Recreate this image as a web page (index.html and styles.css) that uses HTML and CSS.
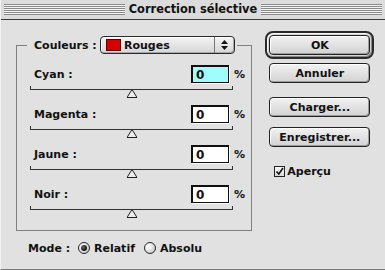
FILE: index.html
```html
<!DOCTYPE html>
<html lang="fr">
<head>
<meta charset="utf-8">
<title>Correction sélective</title>
<link rel="stylesheet" href="styles.css">
</head>
<body>
<div class="window">
  <div class="titlebar">
    <span class="stripes"></span>
    <span class="title">Correction sélective</span>
    <span class="stripes"></span>
  </div>
  <div class="content">
    <div class="left">
      <fieldset class="group">
        <legend class="legend">
          <span class="legend-label">Couleurs :</span>
          <span class="popup">
            <span class="swatch"></span>
            <span class="popup-text">Rouges</span>
            <span class="popup-arrows">
              <svg width="7" height="10" viewBox="0 0 7 10"><polygon points="3.5,0 7,4 0,4" fill="#111"/><polygon points="0,6 7,6 3.5,10" fill="#111"/></svg>
            </span>
          </span>
        </legend>
        <div class="rows">
          <div class="row">
            <div class="row-top"><span class="row-label">Cyan :</span><span class="field field-active">0</span><span class="pct">%</span></div>
            <div class="slider"><svg class="thumb" width="11" height="9" viewBox="0 0 11 9"><polygon points="5.5,0.5 10.5,8.5 0.5,8.5" fill="#ececec" stroke="#222" stroke-width="1"/></svg></div>
          </div>
          <div class="row">
            <div class="row-top"><span class="row-label">Magenta :</span><span class="field">0</span><span class="pct">%</span></div>
            <div class="slider"><svg class="thumb" width="11" height="9" viewBox="0 0 11 9"><polygon points="5.5,0.5 10.5,8.5 0.5,8.5" fill="#ececec" stroke="#222" stroke-width="1"/></svg></div>
          </div>
          <div class="row">
            <div class="row-top"><span class="row-label">Jaune :</span><span class="field">0</span><span class="pct">%</span></div>
            <div class="slider"><svg class="thumb" width="11" height="9" viewBox="0 0 11 9"><polygon points="5.5,0.5 10.5,8.5 0.5,8.5" fill="#ececec" stroke="#222" stroke-width="1"/></svg></div>
          </div>
          <div class="row">
            <div class="row-top"><span class="row-label">Noir :</span><span class="field">0</span><span class="pct">%</span></div>
            <div class="slider"><svg class="thumb" width="11" height="9" viewBox="0 0 11 9"><polygon points="5.5,0.5 10.5,8.5 0.5,8.5" fill="#ececec" stroke="#222" stroke-width="1"/></svg></div>
          </div>
        </div>
      </fieldset>
      <div class="mode">
        <span class="mode-label">Mode :</span>
        <span class="radio radio-on"></span><span class="radio-text">Relatif</span>
        <span class="radio radio-second"></span><span class="radio-text">Absolu</span>
      </div>
    </div>
    <div class="right">
      <div class="default-ring"><button class="btn">OK</button></div>
      <button class="btn btn-side btn-annuler">Annuler</button>
      <button class="btn btn-side btn-charger">Charger...</button>
      <button class="btn btn-side btn-enreg">Enregistrer...</button>
      <div class="check-row">
        <span class="checkbox"><svg width="9" height="9" viewBox="0 0 9 9"><path d="M1.5 4.5 L3.8 7 L8 1" fill="none" stroke="#111" stroke-width="1.6"/></svg></span>
        <span class="check-text">Aperçu</span>
      </div>
    </div>
  </div>
</div>
</body>
</html>
```

FILE: styles.css
```css
* { box-sizing: border-box; }

body {
  margin: 0;
  background: #e1e1e1;
  font: bold 11px "DejaVu Sans", sans-serif;
  color: #111;
}

.window {
  width: 385px;
  height: 270px;
  display: flex;
  flex-direction: column;
  border-bottom: 1px solid #7a7a7a;
  border-left: 1px solid #f2f2f2;
}

.titlebar {
  height: 20px;
  display: flex;
  align-items: center;
  gap: 4px;
  padding: 0 3px;
  background: #dcdcdc;
  border-bottom: 1px solid #3a3a3a;
}

.stripes {
  flex: 1;
  height: 11px;
  background: repeating-linear-gradient(to bottom, #8a8a8a 0 1px, #f4f4f4 1px 2px);
}

.title {
  font-size: 11.4px;
  line-height: 19px;
}

.content {
  flex: 1;
  display: flex;
}

.left {
  width: 265px;
  padding: 16px 0 0 15px;
}

.group {
  margin: 0;
  width: 236px;
  padding: 11px 0 20px;
  border: 1px solid #808080;
}

.legend {
  margin-left: 10px;
  padding: 0 2px 0 7px;
  height: 18px;
  display: flex;
  align-items: center;
  gap: 3px;
}

.legend-label {
  width: 63px;
}

.popup {
  display: flex;
  align-items: center;
  width: 135px;
  height: 18px;
  border: 1px solid #2a2a2a;
  border-radius: 4px;
  background: linear-gradient(#f4f4f4, #d6d6d6);
  box-shadow: inset 1px 1px 0 #fff, inset -1px -1px 0 #a8a8a8;
}

.swatch {
  width: 15px;
  height: 12px;
  margin-left: 5px;
  background: #d60000;
  border: 1px solid #5a0000;
}

.popup-text {
  flex: 1;
  margin-left: 3px;
}

.popup-arrows {
  width: 20px;
  height: 100%;
  display: flex;
  align-items: center;
  justify-content: center;
  border-left: 1px solid #777;
}

.rows {
  display: flex;
  flex-direction: column;
  gap: 15px;
}

.row-top {
  display: flex;
  align-items: center;
  height: 18px;
  padding-left: 17px;
}

.row-label {
  flex: 1;
}

.field {
  width: 38px;
  height: 18px;
  padding-left: 3px;
  line-height: 16px;
  font-size: 12px;
  background: #fff;
  border: 1px solid #111;
  border-width: 2px 1px 1px 2px;
  box-shadow: 1px 1px 0 #fafafa;
}

.field-active {
  background: #a0fdfd;
}

.pct {
  width: 17px;
  margin-left: 5px;
}

.slider {
  position: relative;
  width: 203px;
  height: 4px;
  margin: 3px 0 0 13px;
  border: 1px solid #333;
  border-top: 0;
}

.thumb {
  position: absolute;
  left: 50%;
  top: 3px;
  transform: translateX(-50%);
  display: block;
}

.mode {
  display: flex;
  align-items: center;
  height: 14px;
  margin: 10px 0 0 12px;
}

.mode-label {
  width: 50px;
}

.radio {
  width: 12px;
  height: 12px;
  border: 1px solid #2a2a2a;
  border-radius: 50%;
  background: radial-gradient(circle at 35% 35%, #ffffff 0, #f0f0f0 30%, #b4b4b4 100%);
  display: flex;
  align-items: center;
  justify-content: center;
}

.radio-on::after {
  content: "";
  width: 6px;
  height: 6px;
  border-radius: 50%;
  background: radial-gradient(circle at 35% 35%, #666 0, #111 70%);
}

.radio-second {
  margin-left: 9px;
}

.radio-text {
  margin-left: 4px;
}

.right {
  width: 120px;
  padding-top: 11px;
  display: flex;
  flex-direction: column;
}

.default-ring {
  width: 109px;
  height: 28px;
  border: 2px solid #2b2b2b;
  border-radius: 8px;
  padding: 1px;
  display: flex;
  align-items: center;
  justify-content: center;
  background: #d6d6d6;
  box-shadow: inset 1px 1px 0 #f6f6f6, inset -1px -1px 0 #8a8a8a;
}

.btn {
  width: 101px;
  height: 20px;
  padding: 0;
  font: inherit;
  color: #111;
  border: 1px solid #222;
  border-radius: 4px;
  background: linear-gradient(#f2f2f2, #d2d2d2);
  box-shadow: inset 1px 1px 0 #fff, inset -1px -1px 0 #9c9c9c;
  display: flex;
  align-items: center;
  justify-content: center;
}

.btn-side {
  margin-left: 4px;
}

.btn-annuler { margin-top: 4px; }
.btn-charger { margin-top: 14px; }
.btn-enreg { margin-top: 10px; }

.check-row {
  display: flex;
  align-items: center;
  height: 12px;
  margin: 18px 0 0 9px;
}

.checkbox {
  width: 11px;
  height: 11px;
  border: 1px solid #222;
  background: linear-gradient(#fafafa, #d8d8d8);
  display: flex;
  align-items: center;
  justify-content: center;
}

.check-text {
  margin-left: 2px;
}
```
